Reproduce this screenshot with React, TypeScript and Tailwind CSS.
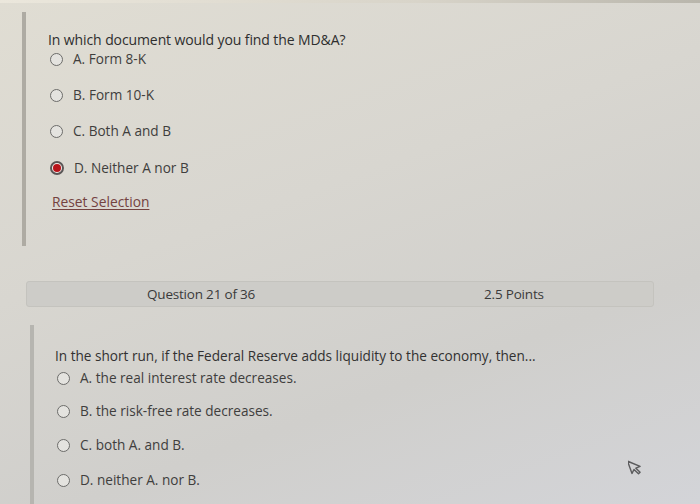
import React from 'react';

interface Option {
  label: string;
  selected?: boolean;
}

const firstOptions: Option[] = [
  { label: 'A. Form 8-K' },
  { label: 'B. Form 10-K' },
  { label: 'C. Both A and B' },
  { label: 'D. Neither A nor B', selected: true },
];

const secondOptions: Option[] = [
  { label: 'A. the real interest rate decreases.' },
  { label: 'B. the risk-free rate decreases.' },
  { label: 'C. both A. and B.' },
  { label: 'D. neither A. nor B.' },
];

const Radio: React.FC<{ selected?: boolean }> = ({ selected }) =>
  selected ? (
    <span className="flex size-[14px] shrink-0 items-center justify-center rounded-full border-[2px] border-[#5a5656] bg-[#f4eeea]">
      <span className="size-[8px] rounded-full bg-[#b8141a]" />
    </span>
  ) : (
    <span className="size-[13px] shrink-0 rounded-full border-[1.5px] border-[#6c6c6a] bg-[#e4e3df]" />
  );

const OptionRow: React.FC<{ option: Option; className: string }> = ({ option, className }) => (
  <div className={`flex h-[16px] items-center gap-[10px] ${className}`}>
    <Radio selected={option.selected} />
    <span className="block h-[16px] whitespace-nowrap leading-[16px]">{option.label}</span>
  </div>
);

const firstGaps = ['mt-[3px]', 'mt-[20px]', 'mt-[20px]', 'mt-[21px]'];
const secondGaps = ['mt-[6px]', 'mt-[17px]', 'mt-[18px]', 'mt-[19px]'];

const App: React.FC = () => {
  return (
    <div className="relative h-[504px] w-[700px] overflow-hidden bg-[linear-gradient(160deg,#e0ddd3_0%,#d8d6d0_40%,#d0cfcc_70%,#d3d4d8_100%)] font-['Open_Sans',sans-serif] text-[#3c3b3b]">
      {/* top strip */}
      <div className="h-[3px] w-full bg-[linear-gradient(90deg,#ebe7dc,#d8d4c9_60%,#b9b6ac)]" />

      {/* question 20 */}
      <div className="ml-[22px] mt-[9px] h-[234px] border-l-[4px] border-[#aeaba3] pl-[22px] pt-[20px]">
        <p className="h-[16px] whitespace-nowrap text-[14px] leading-[16px] tracking-[-0.1px] text-[#2e2e2e]">
          In which document would you find the MD&amp;A?
        </p>
        <div className="pl-[2px] text-[13.6px] text-[#3f3e3d]">
          {firstOptions.map((o, i) => (
            <OptionRow key={o.label} option={o} className={firstGaps[i]} />
          ))}
        </div>
        <a className="mt-[18px] ml-[4px] block h-[16px] whitespace-nowrap text-[13.8px] leading-[16px] text-[#74423f] underline underline-offset-2">
          Reset Selection
        </a>
      </div>

      {/* header bar */}
      <div className="ml-[26px] mt-[35px] flex h-[26px] w-[628px] items-center rounded-[3px] border border-[#c4c3be] bg-[#cdccc8] text-[13.5px] tracking-[-0.2px] text-[#3a3a3a]">
        <span className="ml-[120px] whitespace-nowrap">Question 21 of 36</span>
        <span className="ml-[229px] whitespace-nowrap">2.5 Points</span>
      </div>

      {/* question 21 */}
      <div className="ml-[30px] mt-[18px] h-[200px] border-l-[4px] border-[#b6b5b0] pl-[21px] pt-[23px]">
        <p className="h-[16px] whitespace-nowrap text-[13.6px] leading-[16px] text-[#323131]">
          In the short run, if the Federal Reserve adds liquidity to the economy, then...
        </p>
        <div className="pl-[2px] text-[13.6px] text-[#3f3e3d]">
          {secondOptions.map((o, i) => (
            <OptionRow key={o.label} option={o} className={secondGaps[i]} />
          ))}
        </div>
      </div>

      {/* mouse cursor */}
      <svg className="absolute left-[628px] top-[458px]" width="14" height="18" viewBox="0 0 14 18">
        <path
          d="M2 1 L2 14 L5.2 11 L8 16.5 L10 15.6 L7.4 10.4 L12 10.2 Z"
          fill="#d2d2d4"
          stroke="#5b5b5d"
          strokeWidth="1.4"
          strokeLinejoin="round"
          transform="rotate(-20 7 9)"
        />
      </svg>
    </div>
  );
};

export default App;
